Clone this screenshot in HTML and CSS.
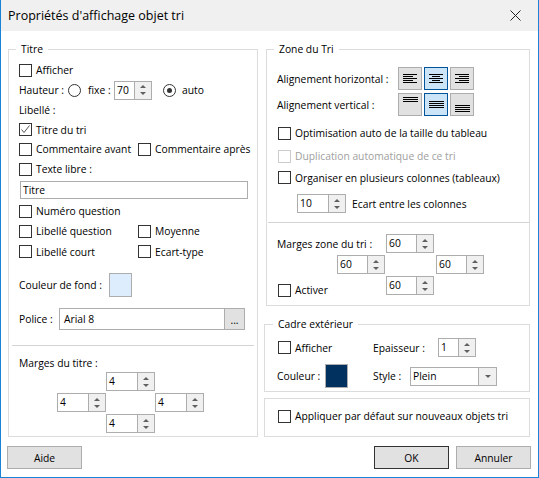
FILE: index.html
```html
<!DOCTYPE html>
<html lang="fr">
<head>
<meta charset="utf-8">
<title>Propriétés d'affichage objet tri</title>
<link rel="stylesheet" href="styles.css">
</head>
<body>
<div class="window">
  <div class="titlebar">
    <span class="title">Propriétés d'affichage objet tri</span>
    <span class="close"><svg width="11" height="11" viewBox="0 0 11 11"><path d="M0.5 0.5 L10.5 10.5 M10.5 0.5 L0.5 10.5" stroke="#222" stroke-width="1" fill="none"/></svg></span>
  </div>

  <div class="content">
    <fieldset class="group g-titre">
      <legend>Titre</legend>
      <div class="row h20"><span class="check"><span class="box"></span><span>Afficher</span></span></div>
      <div class="row h20">
        <span class="lbl-hauteur">Hauteur :</span>
        <span class="radio"></span>
        <span class="lbl-fixe">fixe :</span>
        <span class="spin s38"><span class="val">70</span><span class="arrows"><i class="up"></i><i class="dn"></i></span></span>
        <span class="radio on r-auto"></span>
        <span class="lbl-auto">auto</span>
      </div>
      <div class="row h20">Libellé :</div>
      <div class="row h19"><span class="check"><span class="box"><svg width="11" height="11" viewBox="0 0 11 11"><path d="M1.5 5.5 L4 8.5 L9.5 1.5" fill="none" stroke="#555" stroke-width="1"/></svg></span><span>Titre du tri</span></span></div>
      <div class="row2 h20">
        <span class="check"><span class="box"></span><span>Commentaire avant</span></span>
        <span class="check"><span class="box"></span><span>Commentaire après</span></span>
      </div>
      <div class="row h20"><span class="check"><span class="box"></span><span>Texte libre :</span></span></div>
      <div class="textbox t-titre">Titre</div>
      <div class="row h20 mt2"><span class="check"><span class="box"></span><span>Numéro question</span></span></div>
      <div class="row2 h20">
        <span class="check"><span class="box"></span><span>Libellé question</span></span>
        <span class="check"><span class="box"></span><span>Moyenne</span></span>
      </div>
      <div class="row2 h21">
        <span class="check"><span class="box"></span><span>Libellé court</span></span>
        <span class="check"><span class="box"></span><span>Ecart-type</span></span>
      </div>
      <div class="row h24 mt11">
        <span class="lbl-couleur">Couleur de fond :</span>
        <span class="swatch light"></span>
      </div>
      <div class="row h22 mt11">
        <span class="lbl-police">Police :</span>
        <span class="textbox t-police">Arial 8</span>
        <span class="dots">...</span>
      </div>
      <div class="sep sep-left"></div>
      <div class="row h15 mt9">Marges du titre :</div>
      <div class="mgrid">
        <span class="spin s49 m-top"><span class="val">4</span><span class="arrows"><i class="up"></i><i class="dn"></i></span></span>
        <span class="spin s49 m-left"><span class="val">4</span><span class="arrows"><i class="up"></i><i class="dn"></i></span></span>
        <span class="spin s49 m-right"><span class="val">4</span><span class="arrows"><i class="up"></i><i class="dn"></i></span></span>
        <span class="spin s49 m-bottom"><span class="val">4</span><span class="arrows"><i class="up"></i><i class="dn"></i></span></span>
      </div>
    </fieldset>

    <div class="col-right">
      <fieldset class="group g-zone">
        <legend>Zone du Tri</legend>
        <div class="row h23">
          <span class="lbl-align">Alignement horizontal :</span>
          <span class="abtn"><svg width="14" height="9" viewBox="0 0 14 9"><path d="M0 0.5H14M0 2.5H10M0 4.5H14M0 6.5H10M0 8.5H14" stroke="#000"/></svg></span>
          <span class="abtn sel"><svg width="14" height="9" viewBox="0 0 14 9"><path d="M0 0.5H14M3 2.5H11M0 4.5H14M3 6.5H11M0 8.5H14" stroke="#000"/></svg></span>
          <span class="abtn"><svg width="14" height="9" viewBox="0 0 14 9"><path d="M0 0.5H14M4 2.5H14M0 4.5H14M4 6.5H14M0 8.5H14" stroke="#000"/></svg></span>
        </div>
        <div class="row h23 mt3">
          <span class="lbl-align">Alignement vertical :</span>
          <span class="abtn"><svg width="15" height="21" viewBox="0 0 15 21"><path d="M0 3.5H15M0 5.5H15M0 7.5H15" stroke="#000"/></svg></span>
          <span class="abtn sel"><svg width="15" height="21" viewBox="0 0 15 21"><path d="M0 7.5H15M0 9.5H15M0 11.5H15M0 13.5H15" stroke="#000"/></svg></span>
          <span class="abtn"><svg width="15" height="21" viewBox="0 0 15 21"><path d="M0 11.5H15M0 13.5H15M0 15.5H15M0 17.5H15" stroke="#000"/></svg></span>
        </div>
        <div class="row h22 mt6"><span class="check ml1"><span class="box"></span><span>Optimisation auto de la taille du tableau</span></span></div>
        <div class="row h22 mt1"><span class="check ml1 disabled"><span class="box"></span><span>Duplication automatique de ce tri</span></span></div>
        <div class="row h21"><span class="check ml1"><span class="box"></span><span>Organiser en plusieurs colonnes (tableaux)</span></span></div>
        <div class="row h19 mt6">
          <span class="spin s49 ml20"><span class="val">10</span><span class="arrows"><i class="up"></i><i class="dn"></i></span></span>
          <span class="lbl-ecart">Ecart entre les colonnes</span>
        </div>
        <div class="sep sep-right"></div>
        <div class="zgrid">
          <span class="z-label">Marges zone du tri :</span>
          <span class="spin s48 z-top"><span class="val">60</span><span class="arrows"><i class="up"></i><i class="dn"></i></span></span>
          <span class="spin s48 z-left"><span class="val">60</span><span class="arrows"><i class="up"></i><i class="dn"></i></span></span>
          <span class="spin s48 z-right"><span class="val">60</span><span class="arrows"><i class="up"></i><i class="dn"></i></span></span>
          <span class="check ml1 z-activer"><span class="box"></span><span>Activer</span></span>
          <span class="spin s48 z-bottom"><span class="val">60</span><span class="arrows"><i class="up"></i><i class="dn"></i></span></span>
        </div>
      </fieldset>

      <fieldset class="group g-cadre">
        <legend>Cadre extérieur</legend>
        <div class="cgrid">
          <span class="check ml1"><span class="box"></span><span>Afficher</span></span>
          <span class="cell">
            <span class="lbl-epaisseur">Epaisseur :</span>
            <span class="spin s38"><span class="val">1</span><span class="arrows"><i class="up"></i><i class="dn"></i></span></span>
          </span>
          <span class="cell">
            <span class="lbl-coul">Couleur :</span>
            <span class="swatch dark"></span>
          </span>
          <span class="cell">
            <span class="lbl-style">Style :</span>
            <span class="select"><span class="val">Plein</span><span class="drop"><i class="dn"></i></span></span>
          </span>
        </div>
      </fieldset>

      <div class="group g-apply">
        <span class="check"><span class="box"></span><span>Appliquer par défaut sur nouveaux objets tri</span></span>
      </div>
    </div>
  </div>

  <div class="footer">
    <span class="btn">Aide</span>
    <span class="spacer"></span>
    <span class="btn default">OK</span>
    <span class="btn">Annuler</span>
  </div>
</div>
</body>
</html>
```

FILE: styles.css
```css
* { box-sizing: border-box; }
html, body { margin: 0; padding: 0; background: #fff; }
body {
  font-family: "Open Sans", "Noto Sans", sans-serif;
  font-size: 10.3px;
  color: #000;
}

.window {
  width: 539px;
  height: 478px;
  border: 1px solid #1883d7;
  border-top: 0;
  background: #fff;
  display: flex;
  flex-direction: column;
  overflow: hidden;
}

.titlebar {
  height: 31px;
  flex: none;
  background: #f0f0f0;
  display: flex;
  align-items: center;
}
.title { flex: 1; padding-left: 7px; font-size: 12.5px; }
.close { width: 46px; height: 31px; display: flex; align-items: center; justify-content: center; }

.content {
  flex: none;
  height: 406px;
  padding: 11px 8px 0 7px;
  display: flex;
  gap: 6px;
}

.group {
  margin: 0;
  border: 1px solid #dcdcdc;
  min-width: 0;
}
.group legend { padding: 0 5px; margin-left: -3px; line-height: 15px; }

.g-titre { width: 250px; height: 395px; padding: 3px 10px 0 10px; }

.row { display: flex; align-items: center; }
.row2 { display: grid; grid-template-columns: 119px 1fr; align-items: center; }
.h15 { height: 15px; }
.h19 { height: 19px; }
.h20 { height: 20px; }
.h21 { height: 21px; }
.h22 { height: 22px; }
.h23 { height: 23px; }
.h24 { height: 24px; }
.mt1 { margin-top: 1px; }
.mt2 { margin-top: 2px; }
.mt3 { margin-top: 3px; }
.mt6 { margin-top: 6px; }
.mt9 { margin-top: 9px; }
.mt11 { margin-top: 11px; }
.ml1 { margin-left: 1px; }
.ml20 { margin-left: 20px; }

.check { display: flex; align-items: center; white-space: nowrap; }
.box {
  width: 13px; height: 13px; flex: none;
  border: 1px solid #333;
  background: #fff;
  margin-right: 4px;
  display: flex; align-items: center; justify-content: center;
}
.check.disabled { color: #a0a0a0; }
.check.disabled .box { border-color: #cccccc; }

.radio {
  width: 13px; height: 13px; flex: none;
  border: 1px solid #333;
  border-radius: 50%;
  background: #fff;
  display: flex; align-items: center; justify-content: center;
}
.radio.on::after { content: ""; width: 5px; height: 5px; border-radius: 50%; background: #333; }

.lbl-hauteur { width: 49px; }
.lbl-fixe { width: 26px; margin-left: 7px; }
.r-auto { margin-left: 11px; }
.lbl-auto { margin-left: 6px; }

.spin {
  display: flex; height: 19px; flex: none;
  border: 1px solid #adadad;
  background: #fff;
}
.s38 { width: 38px; }
.s48 { width: 48px; }
.s49 { width: 49px; }
.spin .val { flex: 1; padding-left: 2px; line-height: 17px; }
.arrows {
  width: 17px; flex: none;
  border-left: 1px solid #adadad;
  background: #f0f0f0;
  display: flex; flex-direction: column; align-items: center; justify-content: center; gap: 4px;
}
.up, .dn { display: block; width: 0; height: 0; border-left: 3px solid transparent; border-right: 3px solid transparent; }
.up { border-bottom: 3px solid #606060; }
.dn { border-top: 3px solid #606060; }

.textbox {
  border: 1px solid #adadad;
  background: #fff;
  display: flex; align-items: center;
}
.t-titre { margin-top: 2px; height: 18px; width: 228px; margin-left: 1px; padding-left: 2px; }
.t-police { width: 166px; height: 22px; padding-left: 4px; }
.lbl-police { width: 40px; }
.dots {
  width: 20px; height: 22px;
  border: 1px solid #adadad; border-left: 0;
  background: #e1e1e1;
  display: flex; align-items: flex-end; justify-content: center;
  padding-bottom: 4px; line-height: 10px;
}

.lbl-couleur { width: 90px; }
.swatch { width: 23px; height: 24px; border: 1px solid #adadad; flex: none; }
.swatch.light { background: #ddedfd; }
.swatch.dark { background: #00315f; }

.sep { height: 1px; background: #d4d4d4; }
.sep-left { margin: 15px -7px 0 -7px; }
.sep-right { margin: 9px -9px 0 -9px; }

.mgrid {
  display: grid;
  grid-template-columns: 49px 49px 49px;
  grid-template-rows: 19px 19px 19px;
  row-gap: 2px;
  margin: 2px 0 0 38px;
}
.m-top { grid-column: 2; grid-row: 1; }
.m-left { grid-column: 1; grid-row: 2; }
.m-right { grid-column: 3; grid-row: 2; }
.m-bottom { grid-column: 2; grid-row: 3; }

.col-right { width: 266px; display: flex; flex-direction: column; }

.g-zone { margin-left: 2px; height: 264px; padding: 10px 9px 0 10px; }
.lbl-align { width: 121px; }
.abtn {
  width: 24px; height: 23px; flex: none;
  margin-right: 2px;
  border: 1px solid #adadad;
  background: #e1e1e1;
  display: flex; align-items: center; justify-content: center;
}
.abtn.sel { background: #cce4f7; border-color: #005499; }
.lbl-ecart { margin-left: 6px; }

.zgrid {
  display: grid;
  grid-template-columns: 60px 49px 50px 49px;
  grid-template-rows: 19px 19px 19px;
  row-gap: 2px;
  margin-top: 11px;
}
.z-label { grid-column: 1 / 3; grid-row: 1; align-self: center; }
.z-top { grid-column: 3; grid-row: 1; }
.z-left { grid-column: 2; grid-row: 2; }
.z-right { grid-column: 4; grid-row: 2; }
.z-bottom { grid-column: 3; grid-row: 3; }
.z-activer { grid-column: 1 / 3; grid-row: 3; align-self: end; height: 14px; margin-bottom: -2px; }

.g-cadre { margin-top: 11px; height: 75px; padding: 6px 10px 0 12px; }
.g-cadre legend { margin-left: -4px; }
.cgrid {
  display: grid;
  grid-template-columns: 96px 1fr;
  grid-template-rows: 19px 24px;
  row-gap: 7px;
  align-items: center;
}
.cell { display: flex; align-items: center; height: 100%; }
.lbl-epaisseur { width: 65px; }
.lbl-coul { width: 48px; }
.lbl-style { width: 37px; }
.select {
  width: 87px; height: 19px;
  border: 1px solid #adadad;
  background: #fff;
  display: flex;
}
.select .val { flex: 1; padding-left: 2px; line-height: 17px; }
.drop {
  width: 18px; border-left: 1px solid #adadad; background: #f0f0f0;
  display: flex; align-items: center; justify-content: center;
}

.g-apply {
  margin-top: 6px; height: 39px;
  padding: 0 10px 3px 13px;
  display: flex; align-items: center;
}

.footer {
  flex: 1;
  display: flex;
  align-items: flex-start;
  gap: 7px;
  padding: 9px 7px 0 6px;
}
.spacer { flex: 1; }
.btn {
  width: 75px; height: 23px;
  border: 1px solid #adadad;
  background: #e1e1e1;
  display: flex; align-items: center; justify-content: center;
}
.btn.default { border-color: #333; }
```
